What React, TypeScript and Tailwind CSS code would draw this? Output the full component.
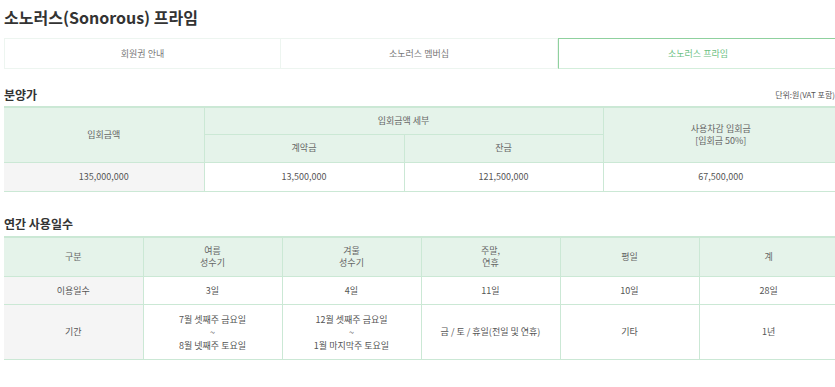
import React from "react";

const font = { fontFamily: '"Noto Sans CJK KR", "Noto Sans", sans-serif' };

const th = "border border-[#cbe8d5] bg-[#e5f3ea] text-[#666] font-normal text-center align-middle p-0";
const td = "border border-[#cbe8d5] text-[#555] text-center align-middle p-0";
const tdGray = "border border-[#cbe8d5] bg-[#f5f5f5] text-[#555] text-center align-middle p-0";

export default function App() {
  return (
    <div className="w-[835px] h-[387px] overflow-hidden bg-white" style={font}>
      <div className="ml-[4px] w-[834px]">
        <h1 className="h-[32px] flex items-center text-[16px] font-bold text-[#333] leading-none pt-[1px]">
          소노러스(Sonorous) 프라임
        </h1>
        <div className="mt-[6px] flex text-[9px] leading-none">
          <div className="w-[277px] h-[31px] flex items-center justify-center border border-[#edf5f0] text-[#777]">회원권 안내</div>
          <div className="w-[277px] h-[31px] flex items-center justify-center border-y border-r border-[#edf5f0] text-[#777]">소노러스 멤버십</div>
          <div className="w-[280px] h-[31px] flex items-center justify-center border border-[#8fd19e] border-b-[#d3eedb] text-[#6cbf83]">소노러스 프라임</div>
        </div>
        <div className="h-[36px] flex items-end justify-between pb-[2px]">
          <h2 className="text-[12px] font-bold text-[#333] leading-[16px]">분양가</h2>
          <span className="text-[8px] text-[#555] leading-[16px] mr-[3px] whitespace-nowrap">단위:원(VAT 포함)</span>
        </div>
        <table className="mt-[1px] w-[834px] table-fixed border-collapse text-[9px] leading-[12px] border-t-2 border-t-[#cbe8d5]">
          <colgroup>
            <col className="w-[200px]" />
            <col className="w-[200px]" />
            <col className="w-[199px]" />
            <col className="w-[235px]" />
          </colgroup>
          <tbody>
            <tr className="h-[27px]">
              <th rowSpan={2} className={`${th} border-l-0`}>입회금액</th>
              <th colSpan={2} className={th}>입회금액 세부</th>
              <th rowSpan={2} className={`${th} border-r-0`}>사용차감 입회금<br />[입회금 50%]</th>
            </tr>
            <tr className="h-[28px]">
              <th className={th}>계약금</th>
              <th className={th}>잔금</th>
            </tr>
            <tr className="h-[29px]">
              <td className={`${tdGray} border-l-0`}>135,000,000</td>
              <td className={td}>13,500,000</td>
              <td className={td}>121,500,000</td>
              <td className={`${td} border-r-0`}>67,500,000</td>
            </tr>
          </tbody>
        </table>
        <h2 className="pt-[24px] mb-[4px] text-[12px] font-bold text-[#333] leading-[16px]">연간 사용일수</h2>
        <table className="w-[834px] table-fixed border-collapse text-[9px] leading-[12px] border-t-2 border-t-[#cbe8d5]">
          <colgroup>
            <col className="w-[139px]" />
            <col className="w-[139px]" />
            <col className="w-[139px]" />
            <col className="w-[139px]" />
            <col className="w-[139px]" />
            <col className="w-[139px]" />
          </colgroup>
          <tbody>
            <tr className="h-[40px]">
              <th className={`${th} border-l-0`}>구분</th>
              <th className={th}>여름<br />성수기</th>
              <th className={th}>겨울<br />성수기</th>
              <th className={th}>주말,<br />연휴</th>
              <th className={th}>평일</th>
              <th className={`${th} border-r-0`}>계</th>
            </tr>
            <tr className="h-[28px]">
              <td className={`${tdGray} border-l-0`}>이용일수</td>
              <td className={td}>3일</td>
              <td className={td}>4일</td>
              <td className={td}>11일</td>
              <td className={td}>10일</td>
              <td className={`${td} border-r-0`}>28일</td>
            </tr>
            <tr className="h-[55px]">
              <td className={`${tdGray} border-l-0`}>기간</td>
              <td className={`${td} leading-[13px]`}>7월 셋째주 금요일<br />~<br />8월 넷째주 토요일</td>
              <td className={`${td} leading-[13px]`}>12월 셋째주 금요일<br />~<br />1월 마지막주 토요일</td>
              <td className={td}>금 / 토 / 휴일(전일 및 연휴)</td>
              <td className={td}>기타</td>
              <td className={`${td} border-r-0`}>1년</td>
            </tr>
          </tbody>
        </table>
      </div>
    </div>
  );
}
